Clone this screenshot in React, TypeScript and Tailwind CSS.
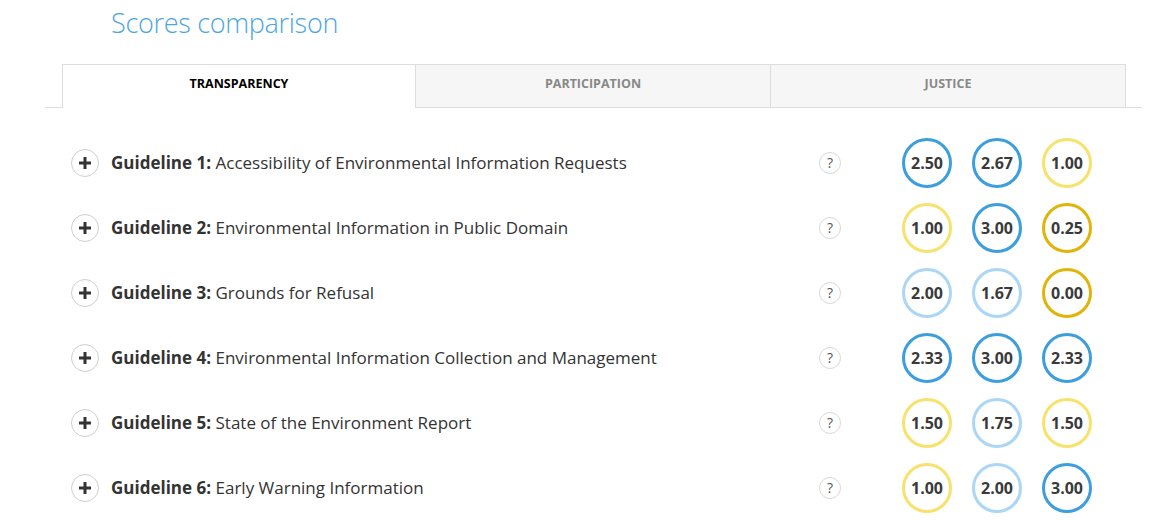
const tabs = ["TRANSPARENCY", "PARTICIPATION", "JUSTICE"];

type Tone = "blue" | "light" | "yellow" | "gold";

const ring: Record<Tone, string> = {
  blue: "border-[#3d9ede]",
  light: "border-[#acd6f5]",
  yellow: "border-[#f6e26c]",
  gold: "border-[#e0b409]",
};

const rows: { n: number; title: string; scores: [string, Tone][] }[] = [
  { n: 1, title: "Accessibility of Environmental Information Requests", scores: [["2.50", "blue"], ["2.67", "blue"], ["1.00", "yellow"]] },
  { n: 2, title: "Environmental Information in Public Domain", scores: [["1.00", "yellow"], ["3.00", "blue"], ["0.25", "gold"]] },
  { n: 3, title: "Grounds for Refusal", scores: [["2.00", "light"], ["1.67", "light"], ["0.00", "gold"]] },
  { n: 4, title: "Environmental Information Collection and Management", scores: [["2.33", "blue"], ["3.00", "blue"], ["2.33", "blue"]] },
  { n: 5, title: "State of the Environment Report", scores: [["1.50", "yellow"], ["1.75", "light"], ["1.50", "yellow"]] },
  { n: 6, title: "Early Warning Information", scores: [["1.00", "yellow"], ["2.00", "light"], ["3.00", "blue"]] },
];

function PlusButton() {
  return (
    <span className="w-[28px] h-[28px] rounded-full border border-[#cfcfcf] flex items-center justify-center shrink-0">
      <svg width="12" height="12" viewBox="0 0 12 12">
        <path d="M6 0v12M0 6h12" stroke="#333" strokeWidth="3" />
      </svg>
    </span>
  );
}

export default function App() {
  return (
    <main className="w-[1155px] h-[520px] bg-white overflow-hidden font-['Open_Sans',sans-serif]">
      <div className="ml-[45px] w-[1097px]">
        <h1 className="pl-[66px] pt-[3px] text-[27px] leading-[40px] font-light text-[#4ea6e0] tracking-[-0.3px]">
          Scores comparison
        </h1>

        {/* Tabs */}
        <div className="mt-[21px] flex border-b border-[#dddddd]">
          <div className="ml-[17px] flex">
            {tabs.map((t, i) => (
              <div
                key={t}
                className={
                  i === 0
                    ? "w-[354px] h-[44px] -mb-px pb-[4px] bg-white border border-b-0 border-[#dddddd] flex items-center justify-center text-[12.5px] font-bold text-black"
                    : "w-[355px] h-[44px] -mb-px pb-[4px] bg-[#f6f6f6] border border-l-0 border-[#dddddd] flex items-center justify-center text-[12.5px] font-bold text-[#888888]"
                }
              >
                {t}
              </div>
            ))}
          </div>
        </div>

        {/* Guidelines */}
        <div className="mt-[22px] pl-[26px]">
          {rows.map((r) => (
            <div key={r.n} className="h-[65px] flex items-center">
              <PlusButton />
              <div className="ml-[12px] w-[708px] text-[17px] text-[#333333] whitespace-nowrap">
                <span className="font-bold">Guideline {r.n}:</span> {r.title}
              </div>
              <span className="w-[22px] h-[22px] rounded-full border border-[#d8d8d8] flex items-center justify-center text-[14px] text-[#555] shrink-0">
                ?
              </span>
              <div className="ml-[61px] flex gap-[20px]">
                {r.scores.map(([v, tone], i) => (
                  <span
                    key={i}
                    className={`w-[50px] h-[50px] rounded-full border-[3px] ${ring[tone]} flex items-center justify-center text-[16px] font-bold text-[#3a3a3a]`}
                  >
                    {v}
                  </span>
                ))}
              </div>
            </div>
          ))}
        </div>
      </div>
    </main>
  );
}
